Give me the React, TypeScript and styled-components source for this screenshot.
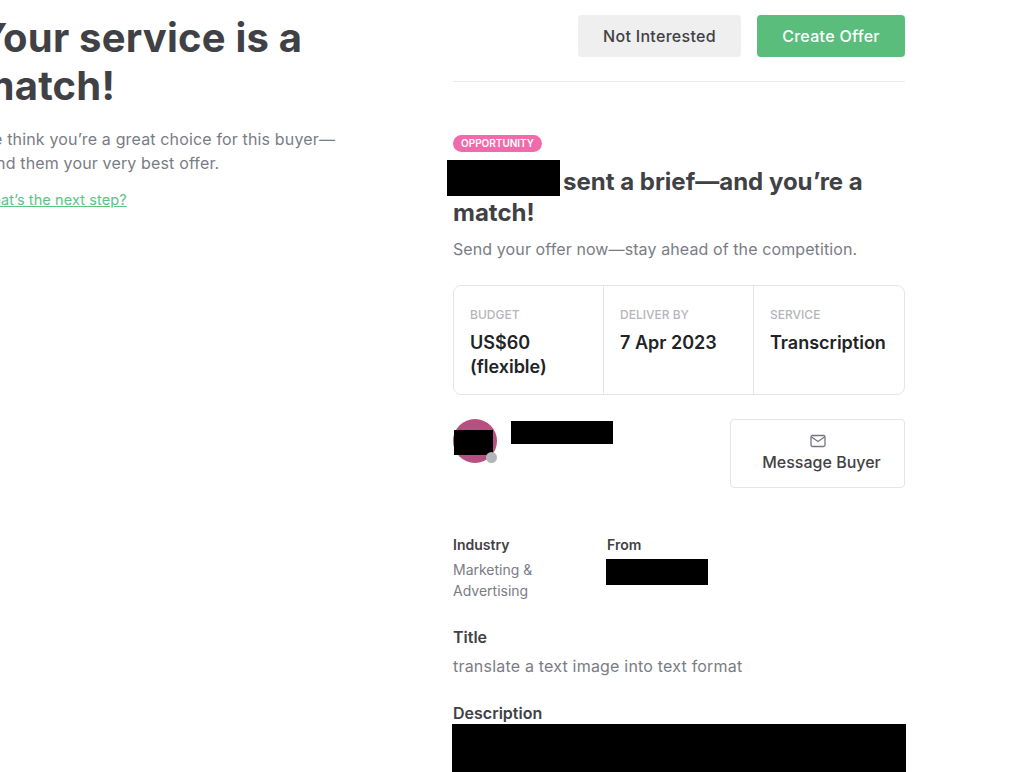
import styled, { createGlobalStyle } from 'styled-components';

const GlobalStyle = createGlobalStyle`
    html, body {
        margin: 0;
        padding: 0;
        height: 100%;
        overflow: hidden;
        background: #fff;
    }
    body {
        font-family: Inter, 'Liberation Sans', sans-serif;
        color: #404145;
    }
`;

const Page = styled.div`
    display: flex;
    width: 1052px;
    height: 772px;
    margin-left: -28px;
    overflow: hidden;
`;

const Sidebar = styled.aside`
    width: 481px;
    flex-shrink: 0;
    padding: 14px 0 0 6px;
    box-sizing: border-box;
`;

const SideTitle = styled.h1`
    width: 340px;
    margin: 0;
    font-size: 40px;
    line-height: 48px;
    font-weight: 700;
    letter-spacing: 0.2px;
    color: #404145;
`;

const SideText = styled.p`
    width: 380px;
    margin: 17px 0 0;
    font-size: 16px;
    line-height: 24px;
    letter-spacing: 0.15px;
    color: #7a7c84;
`;

const SideLink = styled.a`
    display: block;
    margin-top: 15px;
    font-size: 14.5px;
    line-height: 20px;
    letter-spacing: 0.1px;
    color: #5cc47f;
    text-decoration: underline;
`;

const Main = styled.main`
    width: 452px;
    flex-shrink: 0;
`;

const Actions = styled.div`
    display: flex;
    justify-content: flex-end;
    gap: 16px;
    padding: 15px 0 24px;
    border-bottom: 1px solid #e9e9e9;
`;

const ActionButton = styled.button<{ $primary?: boolean }>`
    height: 42px;
    width: ${(p) => (p.$primary ? '148px' : '163px')};
    border: none;
    border-radius: 4px;
    font-family: inherit;
    font-size: 16px;
    font-weight: 500;
    letter-spacing: 0.3px;
    background: ${(p) => (p.$primary ? '#5bbd7b' : '#efefef')};
    color: ${(p) => (p.$primary ? '#fff' : '#404145')};
`;

const Badge = styled.span`
    display: block;
    width: fit-content;
    margin-top: 53px;
    padding: 0 8px;
    border-radius: 9px;
    background: #f06bab;
    color: #fff;
    font-size: 10px;
    line-height: 17px;
    font-weight: 600;
`;

const Headline = styled.h2`
    margin: 14px 0 0;
    font-size: 24px;
    line-height: 31px;
    font-weight: 700;
    color: #404145;
`;

const Redacted = styled.span<{ $w: number; $h: number }>`
    display: inline-block;
    width: ${(p) => p.$w}px;
    height: ${(p) => p.$h}px;
    background: #000;
`;

// sits over the line without making it taller
const HeadlineRedacted = styled(Redacted)`
    margin: -30px 3px -6px -6px;
`;

const Subline = styled.p`
    margin: 9px 0 0;
    font-size: 16px;
    line-height: 24px;
    letter-spacing: 0.1px;
    color: #7a7c84;
`;

const Facts = styled.div`
    display: grid;
    grid-template-columns: 149px 150px 1fr;
    height: 110px;
    margin-top: 24px;
    box-sizing: border-box;
    border: 1px solid #e4e5e7;
    border-radius: 8px;
`;

const Fact = styled.div`
    padding: 21px 16px 0;
    & + & {
        border-left: 1px solid #e4e5e7;
    }
`;

const FactLabel = styled.div`
    font-size: 12px;
    line-height: 16px;
    font-weight: 500;
    color: #b5b6ba;
`;

const FactValue = styled.div`
    margin-top: 8px;
    font-size: 18px;
    line-height: 24px;
    font-weight: 600;
    color: #222325;
`;

const BuyerRow = styled.div`
    display: flex;
    justify-content: space-between;
    margin-top: 24px;
`;

const Buyer = styled.div`
    display: flex;
    align-items: flex-start;
    gap: 14px;
`;

const Avatar = styled.div`
    position: relative;
    width: 44px;
    height: 44px;
    border-radius: 50%;
    background: #b55080;
`;

const AvatarMask = styled.div`
    position: absolute;
    left: 1px;
    top: 11px;
    width: 39px;
    height: 25px;
    background: #000;
`;

const Status = styled.div`
    position: absolute;
    right: 0;
    bottom: 0;
    width: 11px;
    height: 11px;
    border-radius: 50%;
    background: #b5b6ba;
`;

const NameRedacted = styled(Redacted)`
    margin-top: 2px;
`;

const MessageButton = styled.button`
    display: flex;
    flex-direction: column;
    align-items: center;
    justify-content: center;
    gap: 4px;
    width: 175px;
    height: 69px;
    padding: 0 0 2px;
    border: 1px solid #e4e5e7;
    border-radius: 4px;
    background: #fff;
    font-family: inherit;
    font-size: 16px;
    font-weight: 500;
    color: #404145;
`;

const MessageLabel = styled.span`
    padding-left: 8px;
`;

const MetaRow = styled.div`
    display: flex;
    margin-top: 47px;
`;

const MetaColumn = styled.div<{ $w?: number }>`
    width: ${(p) => (p.$w ? `${p.$w}px` : 'auto')};
`;

const MetaLabel = styled.div`
    font-size: 14px;
    line-height: 20px;
    font-weight: 600;
    color: #404145;
`;

const MetaValue = styled.div`
    margin-top: 4px;
    font-size: 14px;
    line-height: 21px;
    color: #7a7c84;
`;

const FromRedacted = styled(Redacted)`
    display: block;
    margin: 4px 0 0 -1px;
`;

const Section = styled.section<{ $gap: number }>`
    margin-top: ${(p) => p.$gap}px;
`;

const SectionTitle = styled.h3`
    margin: 0;
    font-size: 16px;
    line-height: 22px;
    font-weight: 600;
    color: #404145;
`;

const SectionText = styled.p`
    margin: 6px 0 0;
    font-size: 16px;
    line-height: 24px;
    letter-spacing: 0.2px;
    color: #7a7c84;
`;

const DescriptionRedacted = styled(Redacted)`
    display: block;
    margin: 0 -1px 0 -1px;
`;

const MailIcon = () => (
    <svg width="16" height="14" viewBox="0 0 16 14" fill="none" stroke="#74767e" strokeWidth="1.3">
        <rect x="1" y="1.5" width="14" height="11" rx="1.5" />
        <path d="M1.5 3l6.5 4.5L14.5 3" />
    </svg>
);

const App = () => {
    return (
        <Page>
            <GlobalStyle />
            <Sidebar>
                <SideTitle>Your service is a match!</SideTitle>
                <SideText>
                    We think you’re a great choice for this buyer—
                    <br />
                    send them your very best offer.
                </SideText>
                <SideLink>What’s the next step?</SideLink>
            </Sidebar>
            <Main>
                <Actions>
                    <ActionButton>Not Interested</ActionButton>
                    <ActionButton $primary>Create Offer</ActionButton>
                </Actions>
                <Badge>OPPORTUNITY</Badge>
                <Headline>
                    <HeadlineRedacted $w={113} $h={36} />
                    sent a brief—and you’re a match!
                </Headline>
                <Subline>Send your offer now—stay ahead of the competition.</Subline>
                <Facts>
                    <Fact>
                        <FactLabel>BUDGET</FactLabel>
                        <FactValue>US$60 (flexible)</FactValue>
                    </Fact>
                    <Fact>
                        <FactLabel>DELIVER BY</FactLabel>
                        <FactValue>7 Apr 2023</FactValue>
                    </Fact>
                    <Fact>
                        <FactLabel>SERVICE</FactLabel>
                        <FactValue>Transcription</FactValue>
                    </Fact>
                </Facts>
                <BuyerRow>
                    <Buyer>
                        <Avatar>
                            <AvatarMask />
                            <Status />
                        </Avatar>
                        <NameRedacted $w={102} $h={23} />
                    </Buyer>
                    <MessageButton>
                        <MailIcon />
                        <MessageLabel>Message Buyer</MessageLabel>
                    </MessageButton>
                </BuyerRow>
                <MetaRow>
                    <MetaColumn $w={154}>
                        <MetaLabel>Industry</MetaLabel>
                        <MetaValue>
                            Marketing &amp;
                            <br />
                            Advertising
                        </MetaValue>
                    </MetaColumn>
                    <MetaColumn>
                        <MetaLabel>From</MetaLabel>
                        <FromRedacted $w={102} $h={26} />
                    </MetaColumn>
                </MetaRow>
                <Section $gap={25}>
                    <SectionTitle>Title</SectionTitle>
                    <SectionText>translate a text image into text format</SectionText>
                </Section>
                <Section $gap={24}>
                    <SectionTitle>Description</SectionTitle>
                    <DescriptionRedacted $w={454} $h={60} />
                </Section>
            </Main>
        </Page>
    );
};

export default App;
